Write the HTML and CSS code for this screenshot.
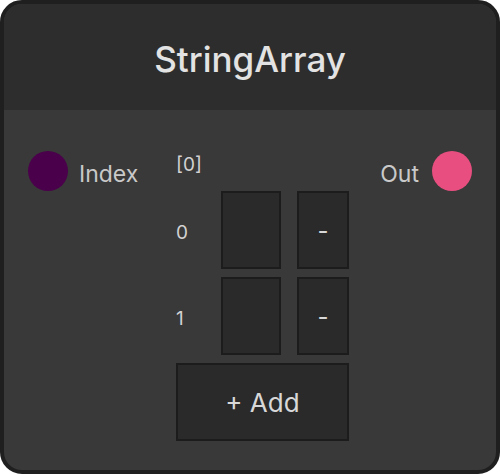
FILE: index.html
```html
<!DOCTYPE html>
<html lang="en">
<head>
    <meta charset="UTF-8">
    <meta name="viewport" content="width=device-width, initial-scale=1.0">
    <title>StringArray</title>
    <link rel="stylesheet" href="styles.css">
</head>
<body>
    <div class="node">
        <div class="node-header">
            <h1>StringArray</h1>
        </div>

        <div class="node-body">
            <div class="port port-in">
                <span class="dot dot-index"></span>
                <span class="port-label">Index</span>
            </div>

            <div class="array">
                <div class="array-index">[0]</div>
                <div class="array-rows">
                    <div class="array-row">
                        <span class="row-label">0</span>
                        <div class="row-input"></div>
                        <button class="row-remove">-</button>
                    </div>
                    <div class="array-row">
                        <span class="row-label">1</span>
                        <div class="row-input"></div>
                        <button class="row-remove">-</button>
                    </div>
                    <button class="add-btn">+ Add</button>
                </div>
            </div>

            <div class="port port-out">
                <span class="port-label">Out</span>
                <span class="dot dot-out"></span>
            </div>
        </div>
    </div>
</body>
</html>
```

FILE: styles.css
```css
body {
    margin: 0;
    font-family: Inter, 'Noto Sans', sans-serif;
    background-color: #ffffff;
}
.node {
    width: 500px;
    height: 474px;
    box-sizing: border-box;
    border: 4px solid #1f1f1f;
    border-radius: 22px;
    overflow: hidden;
    background-color: #393939;
    display: flex;
    flex-direction: column;
}
.node-header {
    height: 106px;
    flex-shrink: 0;
    background-color: #2d2d2d;
    display: flex;
    align-items: center;
    justify-content: center;
}
.node-header h1 {
    margin: 0;
    font-size: 35px;
    font-weight: 500;
    color: #e3e3e3;
    padding-top: 4px;
}
.node-body {
    flex: 1;
    display: grid;
    grid-template-columns: 148px 173px 1fr;
    align-items: start;
    padding: 41px 24px 28px 24px;
}
.port {
    display: flex;
    align-items: center;
    gap: 11px;
    height: 40px;
}
.port-out {
    justify-content: flex-end;
    gap: 13px;
}
.port-label {
    font-size: 23px;
    color: #c9c9c9;
    padding-top: 5px;
}
.dot {
    width: 40px;
    height: 40px;
    border-radius: 50%;
}
.dot-index {
    background-color: #4a004a;
}
.dot-out {
    background-color: #e84f80;
}
.array-index {
    height: 24px;
    line-height: 24px;
    font-size: 19px;
    color: #d2d2d2;
    padding-top: 2px;
    margin-bottom: 14px;
}
.array-rows {
    display: flex;
    flex-direction: column;
    gap: 8px;
}
.array-row {
    display: grid;
    grid-template-columns: 29px 60px 52px;
    column-gap: 16px;
    height: 78px;
    align-items: center;
}
.row-label {
    font-size: 19px;
    color: #d2d2d2;
    padding-top: 5px;
}
.row-input,
.row-remove,
.add-btn {
    box-sizing: border-box;
    background-color: #2a2a2a;
    border: 2px solid #1c1c1c;
    color: #d8d8d8;
    font-family: Inter, 'Noto Sans', sans-serif;
}
.row-input {
    height: 78px;
}
.row-remove {
    height: 78px;
    padding: 0;
    font-size: 24px;
}
.add-btn {
    width: 173px;
    height: 78px;
    font-size: 26px;
    padding-top: 2px;
}
```
